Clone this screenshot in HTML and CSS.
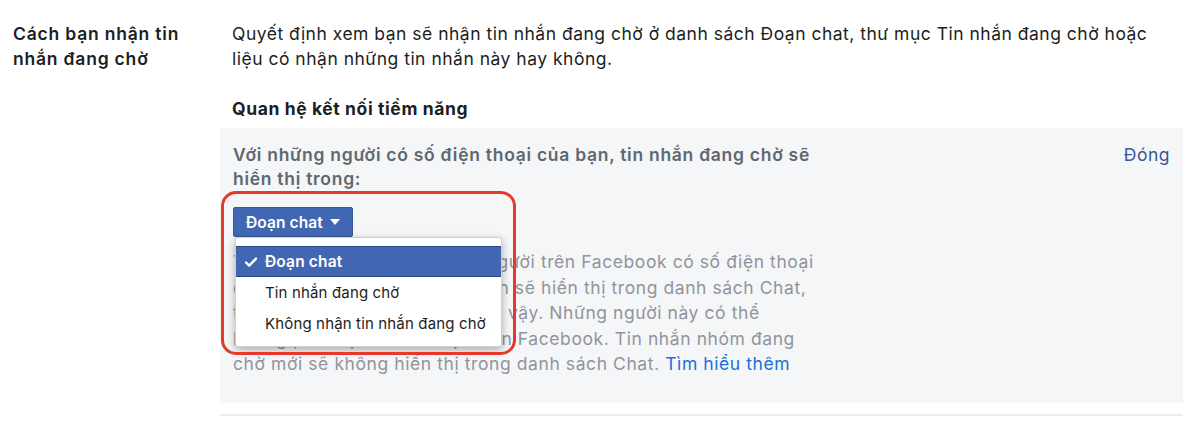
FILE: index.html
```html
<!DOCTYPE html>
<html lang="vi">
<head>
<meta charset="utf-8">
<title>Tin nhắn đang chờ</title>
<link rel="stylesheet" href="styles.css">
</head>
<body>
<div class="setting">
  <div class="label">Cách bạn nhận tin nhắn đang chờ</div>
  <div class="content">
    <p class="desc">Quyết định xem bạn sẽ nhận tin nhắn đang chờ ở danh sách Đoạn chat, thư mục Tin nhắn đang chờ hoặc liệu có nhận những tin nhắn này hay không.</p>
    <h3 class="heading">Quan hệ kết nối tiềm năng</h3>
    <div class="panel">
      <div class="panel-body">
        <div class="question">Với những người có số điện thoại của bạn, tin nhắn đang chờ sẽ hiển thị trong:</div>
        <div class="control">
          <button class="select">Đoạn chat <span class="caret"></span></button>
          <ul class="menu">
            <li class="item active"><svg class="check" viewBox="0 0 14 12" width="14" height="12"><path d="M2 6.5 L5.2 9.6 L12 2.6" fill="none" stroke="#fff" stroke-width="2.4" stroke-linecap="round" stroke-linejoin="round"/></svg>Đoạn chat</li>
            <li class="item">Tin nhắn đang chờ</li>
            <li class="item">Không nhận tin nhắn đang chờ</li>
          </ul>
          <div class="annotation"></div>
        </div>
        <p class="note">Tin nhắn đang chờ từ những người trên Facebook có số điện thoại<br>của bạn và đã được xếp ưu tiên sẽ hiển thị trong danh sách Chat,<br>trừ khi bạn đã chọn không như vậy. Những người này có thể<br>không phải bạn bè của bạn trên Facebook. Tin nhắn nhóm đang<br>chờ mới sẽ không hiển thị trong danh sách Chat. <a class="link" href="#">Tìm hiểu thêm</a></p>
      </div>
      <a class="close" href="#">Đóng</a>
    </div>
    <div class="divider"></div>
  </div>
</div>
</body>
</html>
```
FILE: styles.css
```css
* { box-sizing: border-box; }
body {
  margin: 0;
  background: #fff;
  font-family: Inter, "Liberation Sans", Arial, sans-serif;
  color: #1c1e21;
  font-size: 17.5px;
  letter-spacing: 0.5px;
}
.setting {
  display: flex;
  padding-top: 21px;
}
.label {
  width: 220px;
  padding: 0 30px 0 13px;
  font-weight: 600;
  line-height: 25px;
  letter-spacing: 0.8px;
  color: #1c1e21;
}
.content {
  width: 963px;
}
.desc {
  margin: 0 0 0 12px;
  line-height: 25px;
  max-width: 940px;
}
.heading {
  margin: 25px 0 7px 12px;
  font-size: 17.5px;
  line-height: 25px;
  font-weight: 700;
  letter-spacing: 0.6px;
}
.panel {
  background: #f5f6f7;
  display: flex;
  justify-content: space-between;
  padding: 15px 13px 26px 13px;
}
.panel-body {
  width: 600px;
}
.question {
  font-weight: 600;
  color: #606770;
  line-height: 24px;
  letter-spacing: 0.72px;
  width: 585px;
}
.control {
  position: relative;
  margin-top: 16px;
  height: 30px;
}
.select {
  height: 30px;
  padding: 0 12px;
  background: #4267b2;
  border: 1px solid #365899;
  border-radius: 2px;
  color: #fff;
  font-family: inherit;
  font-weight: 600;
  font-size: 15.5px;
  letter-spacing: 0.1px;
  display: flex;
  align-items: center;
  gap: 7px;
}
.caret {
  width: 0;
  height: 0;
  border-left: 5px solid transparent;
  border-right: 5px solid transparent;
  border-top: 6px solid #fff;
}
.menu {
  position: absolute;
  left: 2px;
  top: 30px;
  width: 267px;
  margin: 0;
  padding: 8px 0 7px;
  list-style: none;
  background: #fff;
  border: 1px solid #ccd0d5;
  border-radius: 3px;
  box-shadow: 0 3px 8px rgba(0, 0, 0, 0.3);
  z-index: 2;
}
.item {
  height: 31px;
  display: flex;
  align-items: center;
  padding-left: 29px;
  font-size: 15px;
  letter-spacing: 0.15px;
  color: #1c1e21;
}
.item.active {
  background: #4267b2;
  border-top: 1px solid #29487d;
  border-bottom: 1px solid #29487d;
  color: #fff;
  font-weight: 600;
  padding-left: 8px;
  font-size: 15.5px;
}
.check {
  margin-right: 7px;
}
.annotation {
  position: absolute;
  left: -12px;
  top: -16px;
  width: 295px;
  height: 164px;
  border: 3px solid #e6392b;
  border-radius: 15px;
  z-index: 3;
}
.note {
  margin: 12px 0 0;
  color: #90949c;
  line-height: 25.6px;
  letter-spacing: 0.58px;
  white-space: nowrap;
}
.link {
  color: #216fdb;
  text-decoration: none;
}
.close {
  color: #385898;
  text-decoration: none;
  line-height: 24px;
  align-self: flex-start;
}
.divider {
  margin-top: 11px;
  height: 2px;
  background: #ebedf0;
}
```
